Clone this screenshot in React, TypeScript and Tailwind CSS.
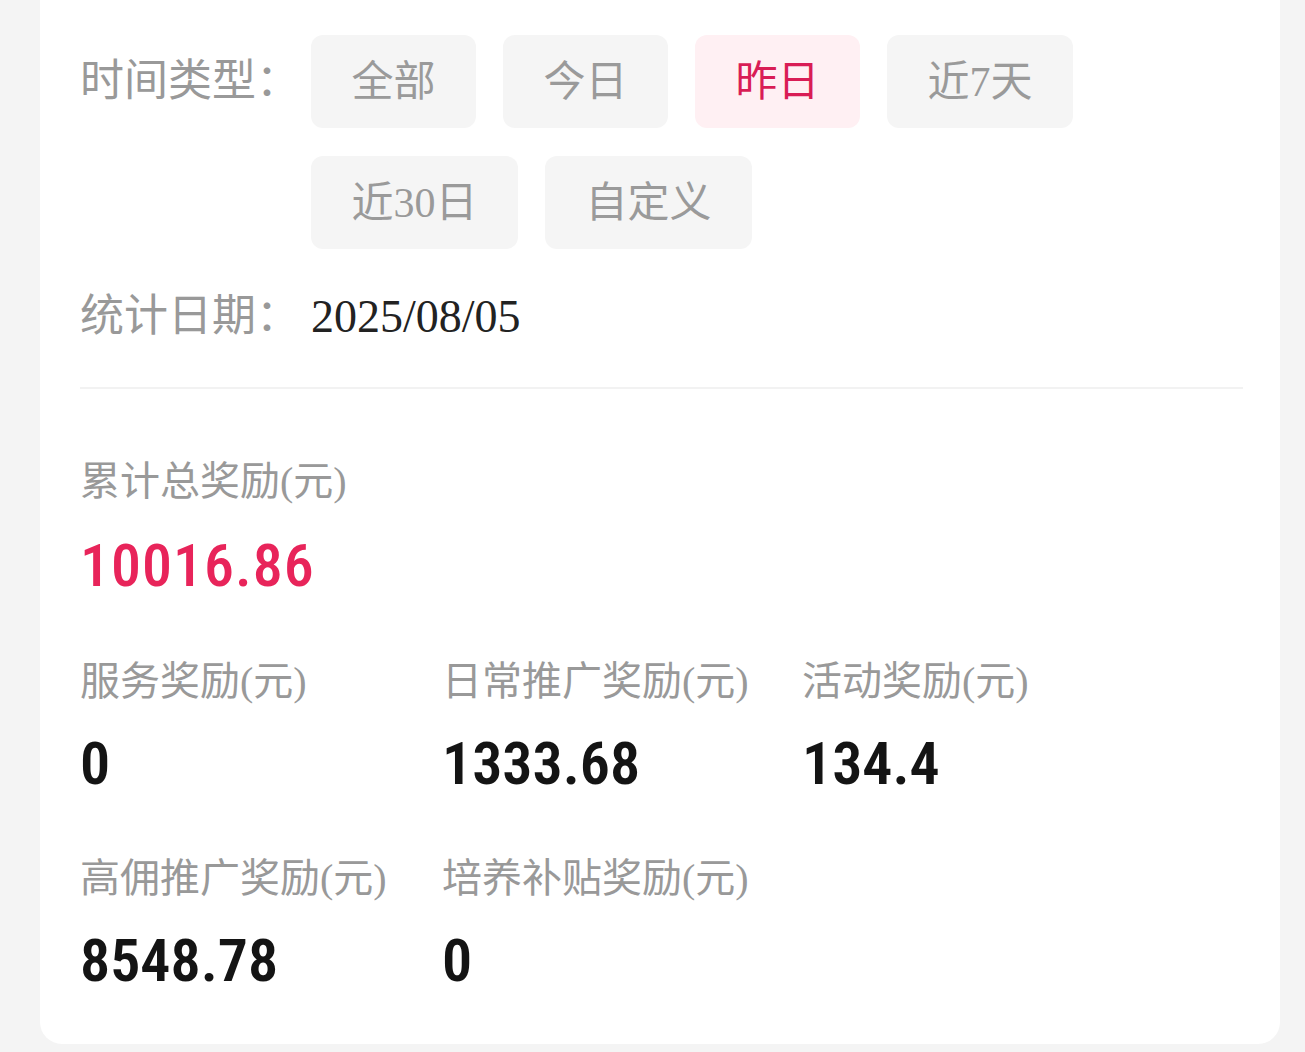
import { useState } from "react";

const cjk = "font-['Liberation_Serif','Noto_Sans_CJK_SC',serif]";
const num = "font-['Roboto','DejaVu_Sans',sans-serif]";

const ranges = ["全部", "今日", "昨日", "近7天", "近30日", "自定义"];

const stats = [
  { label: "服务奖励(元)", value: "0" },
  { label: "日常推广奖励(元)", value: "1333.68" },
  { label: "活动奖励(元)", value: "134.4" },
  { label: "高佣推广奖励(元)", value: "8548.78" },
  { label: "培养补贴奖励(元)", value: "0" },
];

const App = () => {
  const [active, setActive] = useState<string>("昨日");

  return (
    <div className="min-h-screen bg-[#f4f4f4] pl-[40px] pr-[25px] pb-[7px]">
      <div className={`bg-white rounded-b-[22px] pl-[40px] pr-[37px] pt-[35px] pb-[48px] ${cjk}`}>
        <div className="flex items-start">
          <div className="w-[231px] h-[93px] flex items-center text-[44px] text-[#999999] leading-none shrink-0">
            时间类型：
          </div>
          <div className="flex flex-wrap gap-x-[27px] gap-y-[28px]">
            {ranges.map(r => (
              <button
                key={r}
                type="button"
                onClick={() => setActive(r)}
                className={`h-[93px] px-[40.5px] rounded-[12px] text-[42px] leading-none ${
                  active === r ? "bg-[#fff0f3] text-[#d91d55]" : "bg-[#f5f5f5] text-[#9a9a9a]"
                }`}
              >
                {r}
              </button>
            ))}
          </div>
        </div>

        <div className="mt-[38px] h-[60px] flex items-center">
          <span className="w-[231px] text-[44px] text-[#999999] leading-none">统计日期：</span>
          <span className="text-[46px] text-[#222222] leading-none">2025/08/05</span>
        </div>

        <div className="mt-[40px] h-[2px] bg-[#f2f2f2]" />

        <div className="mt-[65px] h-[56px] flex items-center text-[40px] text-[#999999] leading-none">
          累计总奖励(元)
        </div>
        <div
          className={`mt-[21px] h-[70px] flex items-center text-[60px] font-medium text-[#e8245a] leading-none tracking-[1px] font-stretch-semi-condensed ${num}`}
        >
          10016.86
        </div>

        <div className="mt-[53px] grid grid-cols-[362px_360px_1fr] gap-y-[52px]">
          {stats.map(s => (
            <div key={s.label} className="flex flex-col">
              <div className="h-[56px] flex items-center text-[40px] text-[#999999] leading-none whitespace-nowrap">
                {s.label}
              </div>
              <div
                className={`mt-[19px] h-[70px] flex items-center text-[60px] font-semibold text-[#141414] leading-none font-stretch-semi-condensed ${num}`}
              >
                {s.value}
              </div>
            </div>
          ))}
        </div>
      </div>
    </div>
  );
};

export default App;
